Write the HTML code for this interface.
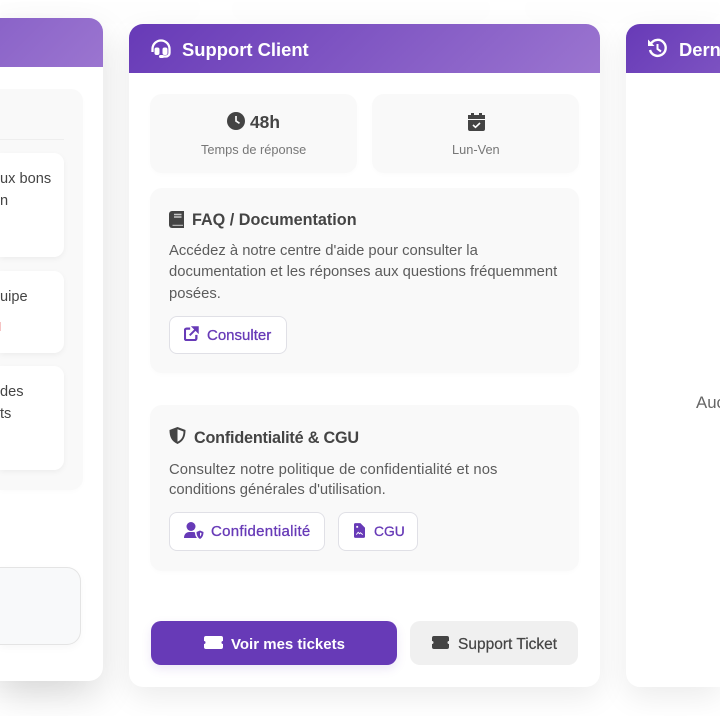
<!DOCTYPE html>
<html lang="fr"><head><meta charset="utf-8"><title>Support Client</title>
<style>
html,body{margin:0;padding:0}
body{width:720px;height:716px;position:relative;overflow:hidden;background:#fff;font-family:"Liberation Sans",sans-serif;color:#444}
div,a,span,svg{position:absolute;box-sizing:border-box}
.t{white-space:nowrap;line-height:22px}
.top{background:#fff;height:2px;top:0;box-shadow:0 8px 24px rgba(0,0,0,.11)}
.card{background:#fff;border-radius:14px;box-shadow:0 10px 30px rgba(0,0,0,.08);overflow:hidden}
.head{left:0;top:0;right:0;height:49px}
.box{background:#f9f9f9;border-radius:12px;box-shadow:0 2px 5px rgba(0,0,0,.015)}
.inner{background:#fff;border-radius:0 10px 10px 0;box-shadow:0 2px 6px rgba(0,0,0,.05)}
.btn{background:#fff;border:1px solid #e0e0e6;border-radius:8px}
.p{font-size:14.8px;color:#5c5c5c}
.h{font-size:16.2px;font-weight:bold;color:#444}
.l{font-size:15px;color:#673ab7;-webkit-text-stroke:.3px #673ab7}
</style></head><body>
<div class="top" style="left:0;width:200px"></div>
<div class="top" style="left:232px;width:258px"></div>
<div class="top" style="left:525px;width:195px"></div>

<div class="card" style="left:0;top:18px;width:103px;height:663px;border-radius:0 14px 14px 0;box-shadow:0 15px 35px rgba(0,0,0,.13),-30px 12px 30px rgba(0,0,0,.03)">
  <div class="head" style="background:linear-gradient(135deg,#8a63c8,#9b75d0)"></div>
</div>
<div class="box" style="left:0;top:89px;width:83px;height:401px;border-radius:0 12px 12px 0"></div>
<div style="left:0;top:139px;width:64px;height:1px;background:#eee"></div>
<div class="inner" style="left:0;top:153px;width:64px;height:104px"></div>
<div class="inner" style="left:0;top:271px;width:64px;height:82px"></div>
<div class="inner" style="left:0;top:366px;width:64px;height:104px"></div>
<div class="t p" style="left:0;top:168px;font-size:14.6px;color:#444">ux bons</div>
<div class="t p" style="left:0;top:190px;font-size:14.6px;color:#444">n</div>
<div class="t p" style="left:0;top:286px;font-size:14.6px;color:#444">uipe</div>
<div style="left:0;top:322px;width:1px;height:9px;background:#f6c4c4"></div>
<div class="t p" style="left:0;top:381px;font-size:14.6px;color:#444">des</div>
<div class="t p" style="left:0;top:403px;font-size:14.6px;color:#444">ts</div>
<div style="left:0;top:567px;width:81px;height:78px;border-radius:0 14px 14px 0;background:#f8f9fa;border:1px solid #e4e4e4;border-left:0;box-shadow:0 3px 8px rgba(0,0,0,.03)"></div>

<div class="card" style="left:129px;top:24px;width:471px;height:663px">
  <div class="head" style="background:linear-gradient(135deg,#673ab7,#9b75d0)"></div>
</div>
<svg style="left:151px;top:39px" width="20" height="20" viewBox="0 0 20 20"><path d="M1.500 13V10a8.500 8.500 0 0 1 17 0v4a3.500 3.500 0 0 1-3.500 3.500h-4" fill="none" stroke="#fff" stroke-width="2.300"/><rect x="3.500" y="8.500" width="5" height="7.500" rx="2" fill="#fff"/><rect x="11.500" y="8.500" width="5" height="7.500" rx="2" fill="#fff"/><rect x="8" y="16" width="5" height="3" rx="1.500" fill="#fff"/></svg>
<div class="t" style="left:182px;top:39px;font-size:18.4px;font-weight:bold;color:#fff">Support Client</div>

<div class="box" style="left:150px;top:94px;width:207px;height:79px"></div>
<div class="box" style="left:372px;top:94px;width:207px;height:79px"></div>
<svg style="left:227px;top:112px" width="18" height="18" viewBox="0 0 18 18"><circle cx="9" cy="9" r="9" fill="#444"/><path d="M9 4v5l3.500 2.300" fill="none" stroke="#f9f9f9" stroke-width="1.700"/></svg>
<div class="t" style="left:250px;top:111px;font-size:17.4px;font-weight:bold;color:#444">48h</div>
<div class="t" style="left:201px;top:139px;font-size:12.8px;color:#777">Temps de réponse</div>
<svg style="left:468px;top:112px" width="17" height="19" viewBox="0 0 17 19"><path d="M3 1h3v2h5V1h3v2h3v4H0V3h3zM0 8h17v9a2 2 0 0 1-2 2H2a2 2 0 0 1-2-2z" fill="#444"/><path d="M5 13l2.500 2.300L12 11" fill="none" stroke="#fff" stroke-width="1.600"/></svg>
<div class="t" style="left:452px;top:139px;font-size:12.8px;color:#777">Lun-Ven</div>

<div class="box" style="left:150px;top:188px;width:429px;height:185px"></div>
<svg style="left:169px;top:211px" width="15" height="17" viewBox="0 0 15 17"><path d="M3 0h12v17H3a3 3 0 0 1-3-3V3a3 3 0 0 1 3-3z" fill="#444"/><path d="M3.500 14.300h10.500" stroke="#ccc" stroke-width="1"/><path d="M5 3.500h7.500M5 6h7.500" stroke="#c9c9c9" stroke-width="1.400"/></svg>
<div class="t h" style="left:192px;top:209px">FAQ / Documentation</div>
<div class="t p" style="left:169px;top:240px">Accédez à notre centre d'aide pour consulter la</div>
<div class="t p" style="left:169px;top:261px">documentation et les réponses aux questions fréquemment</div>
<div class="t p" style="left:169px;top:283px">posées.</div>
<div class="btn" style="left:169px;top:316px;width:118px;height:38px"></div>
<svg style="left:184px;top:326px" width="15" height="15" viewBox="0 0 17 17"><path d="M7 3H3a2 2 0 0 0-2 2v9a2 2 0 0 0 2 2h9a2 2 0 0 0 2-2v-4" fill="none" stroke="#673ab7" stroke-width="2.600"/><path d="M6.500 10.500L14 3" fill="none" stroke="#673ab7" stroke-width="2.200"/><path d="M9.500 1H16v6.500z" fill="#673ab7" stroke="#673ab7" stroke-width="1.400"/></svg>
<div class="t l" style="left:207px;top:325px">Consulter</div>

<div class="box" style="left:150px;top:405px;width:429px;height:166px"></div>
<svg style="left:169px;top:427px" width="17" height="17" viewBox="0 0 17 17"><path d="M8.500 0L16.500 3c0 6-1.500 11-8 14-6.500-3-8-8-8-14z" fill="#444"/><path d="M8.500 2.300L14.500 4.500c-.1 4.500-1.500 8-6 10.300z" fill="#f9f9f9"/></svg>
<div class="t h" style="left:194px;top:427px;letter-spacing:-.2px">Confidentialité &amp; CGU</div>
<div class="t p" style="left:169px;top:459px;letter-spacing:.12px">Consultez notre politique de confidentialité et nos</div>
<div class="t p" style="left:169px;top:479px">conditions générales d'utilisation.</div>
<div class="btn" style="left:169px;top:512px;width:156px;height:39px"></div>
<svg style="left:184px;top:522px" width="20" height="17" viewBox="0 0 20 17"><circle cx="7" cy="4.500" r="4.500" fill="#673ab7"/><path d="M0 16c0-4 2.500-6 5.500-6h3c1 0 2 .2 2.500.5 0 2 .5 4 2 5.500z" fill="#673ab7"/><path d="M16 8.500l3.500 1.500c0 3-1 5.500-3.500 7-2.500-1.500-3.500-4-3.500-7z" fill="#673ab7"/><path d="M16 10.500l1.500.6c0 1.500-.5 2.500-1.500 3.400z" fill="#fff"/></svg>
<div class="t l" style="left:211px;top:521px;letter-spacing:.3px">Confidentialité</div>
<div class="btn" style="left:338px;top:512px;width:80px;height:39px"></div>
<svg style="left:354px;top:523px" width="11" height="15" viewBox="0 0 12 16"><path d="M0 1.500A1.500 1.500 0 0 1 1.500 0H7l5 5v9.500a1.500 1.500 0 0 1-1.500 1.500h-9A1.500 1.500 0 0 1 0 14.500z" fill="#673ab7"/><path d="M2.500 12.500l2-2.500 1.500 1.500 1-1 2.500 2" fill="none" stroke="#fff" stroke-width="1"/><rect x="2.500" y="3" width="2" height="2" fill="#fff"/></svg>
<div class="t l" style="left:374px;top:521px;font-size:13.8px">CGU</div>

<div style="left:151px;top:621px;width:246px;height:44px;border-radius:10px;background:#673ab7;box-shadow:0 4px 10px rgba(103,58,183,.12)"></div>
<svg style="left:204px;top:636px" width="19" height="13" viewBox="0 0 19 13"><path d="M2 0h15a2 2 0 0 1 2 2v3a1.500 1.500 0 0 0 0 3v3a2 2 0 0 1-2 2H2a2 2 0 0 1-2-2V8a1.500 1.500 0 0 0 0-3V2a2 2 0 0 1 2-2z" fill="#fff"/></svg>
<div class="t" style="left:231px;top:634px;font-size:15px;font-weight:bold;color:#fff">Voir mes tickets</div>
<div style="left:410px;top:621px;width:168px;height:44px;border-radius:10px;background:#f0f0f0"></div>
<svg style="left:432px;top:636px" width="17" height="13" viewBox="0 0 17 13"><path d="M2 0h13a2 2 0 0 1 2 2v3a1.500 1.500 0 0 0 0 3v3a2 2 0 0 1-2 2H2a2 2 0 0 1-2-2V8a1.500 1.500 0 0 0 0-3V2a2 2 0 0 1 2-2z" fill="#444"/></svg>
<div class="t" style="left:458px;top:634px;font-size:15.5px;color:#444;-webkit-text-stroke:.2px #444">Support Ticket</div>

<div class="card" style="left:626px;top:24px;width:94px;height:663px;border-radius:14px 0 0 14px">
  <div class="head" style="background:linear-gradient(135deg,#673ab7,#9b75d0) 0 0/300px 49px no-repeat"></div>
  <svg style="left:21px;top:14px" width="21" height="21" viewBox="0 0 21 21"><path d="M4 5.500A8 8 0 1 1 3 12" fill="none" stroke="#fff" stroke-width="2.400"/><path d="M1 1.500v6.500h6.500z" fill="#fff"/><path d="M10.500 6v5l3.500 2.500" fill="none" stroke="#fff" stroke-width="2"/></svg>
  <div class="t" style="left:53px;top:15px;font-size:18.4px;font-weight:bold;color:#fff">Dernières</div>
  <div class="t" style="left:70px;top:368px;font-size:16.8px;color:#666">Aucun</div>
</div>
</body></html>
